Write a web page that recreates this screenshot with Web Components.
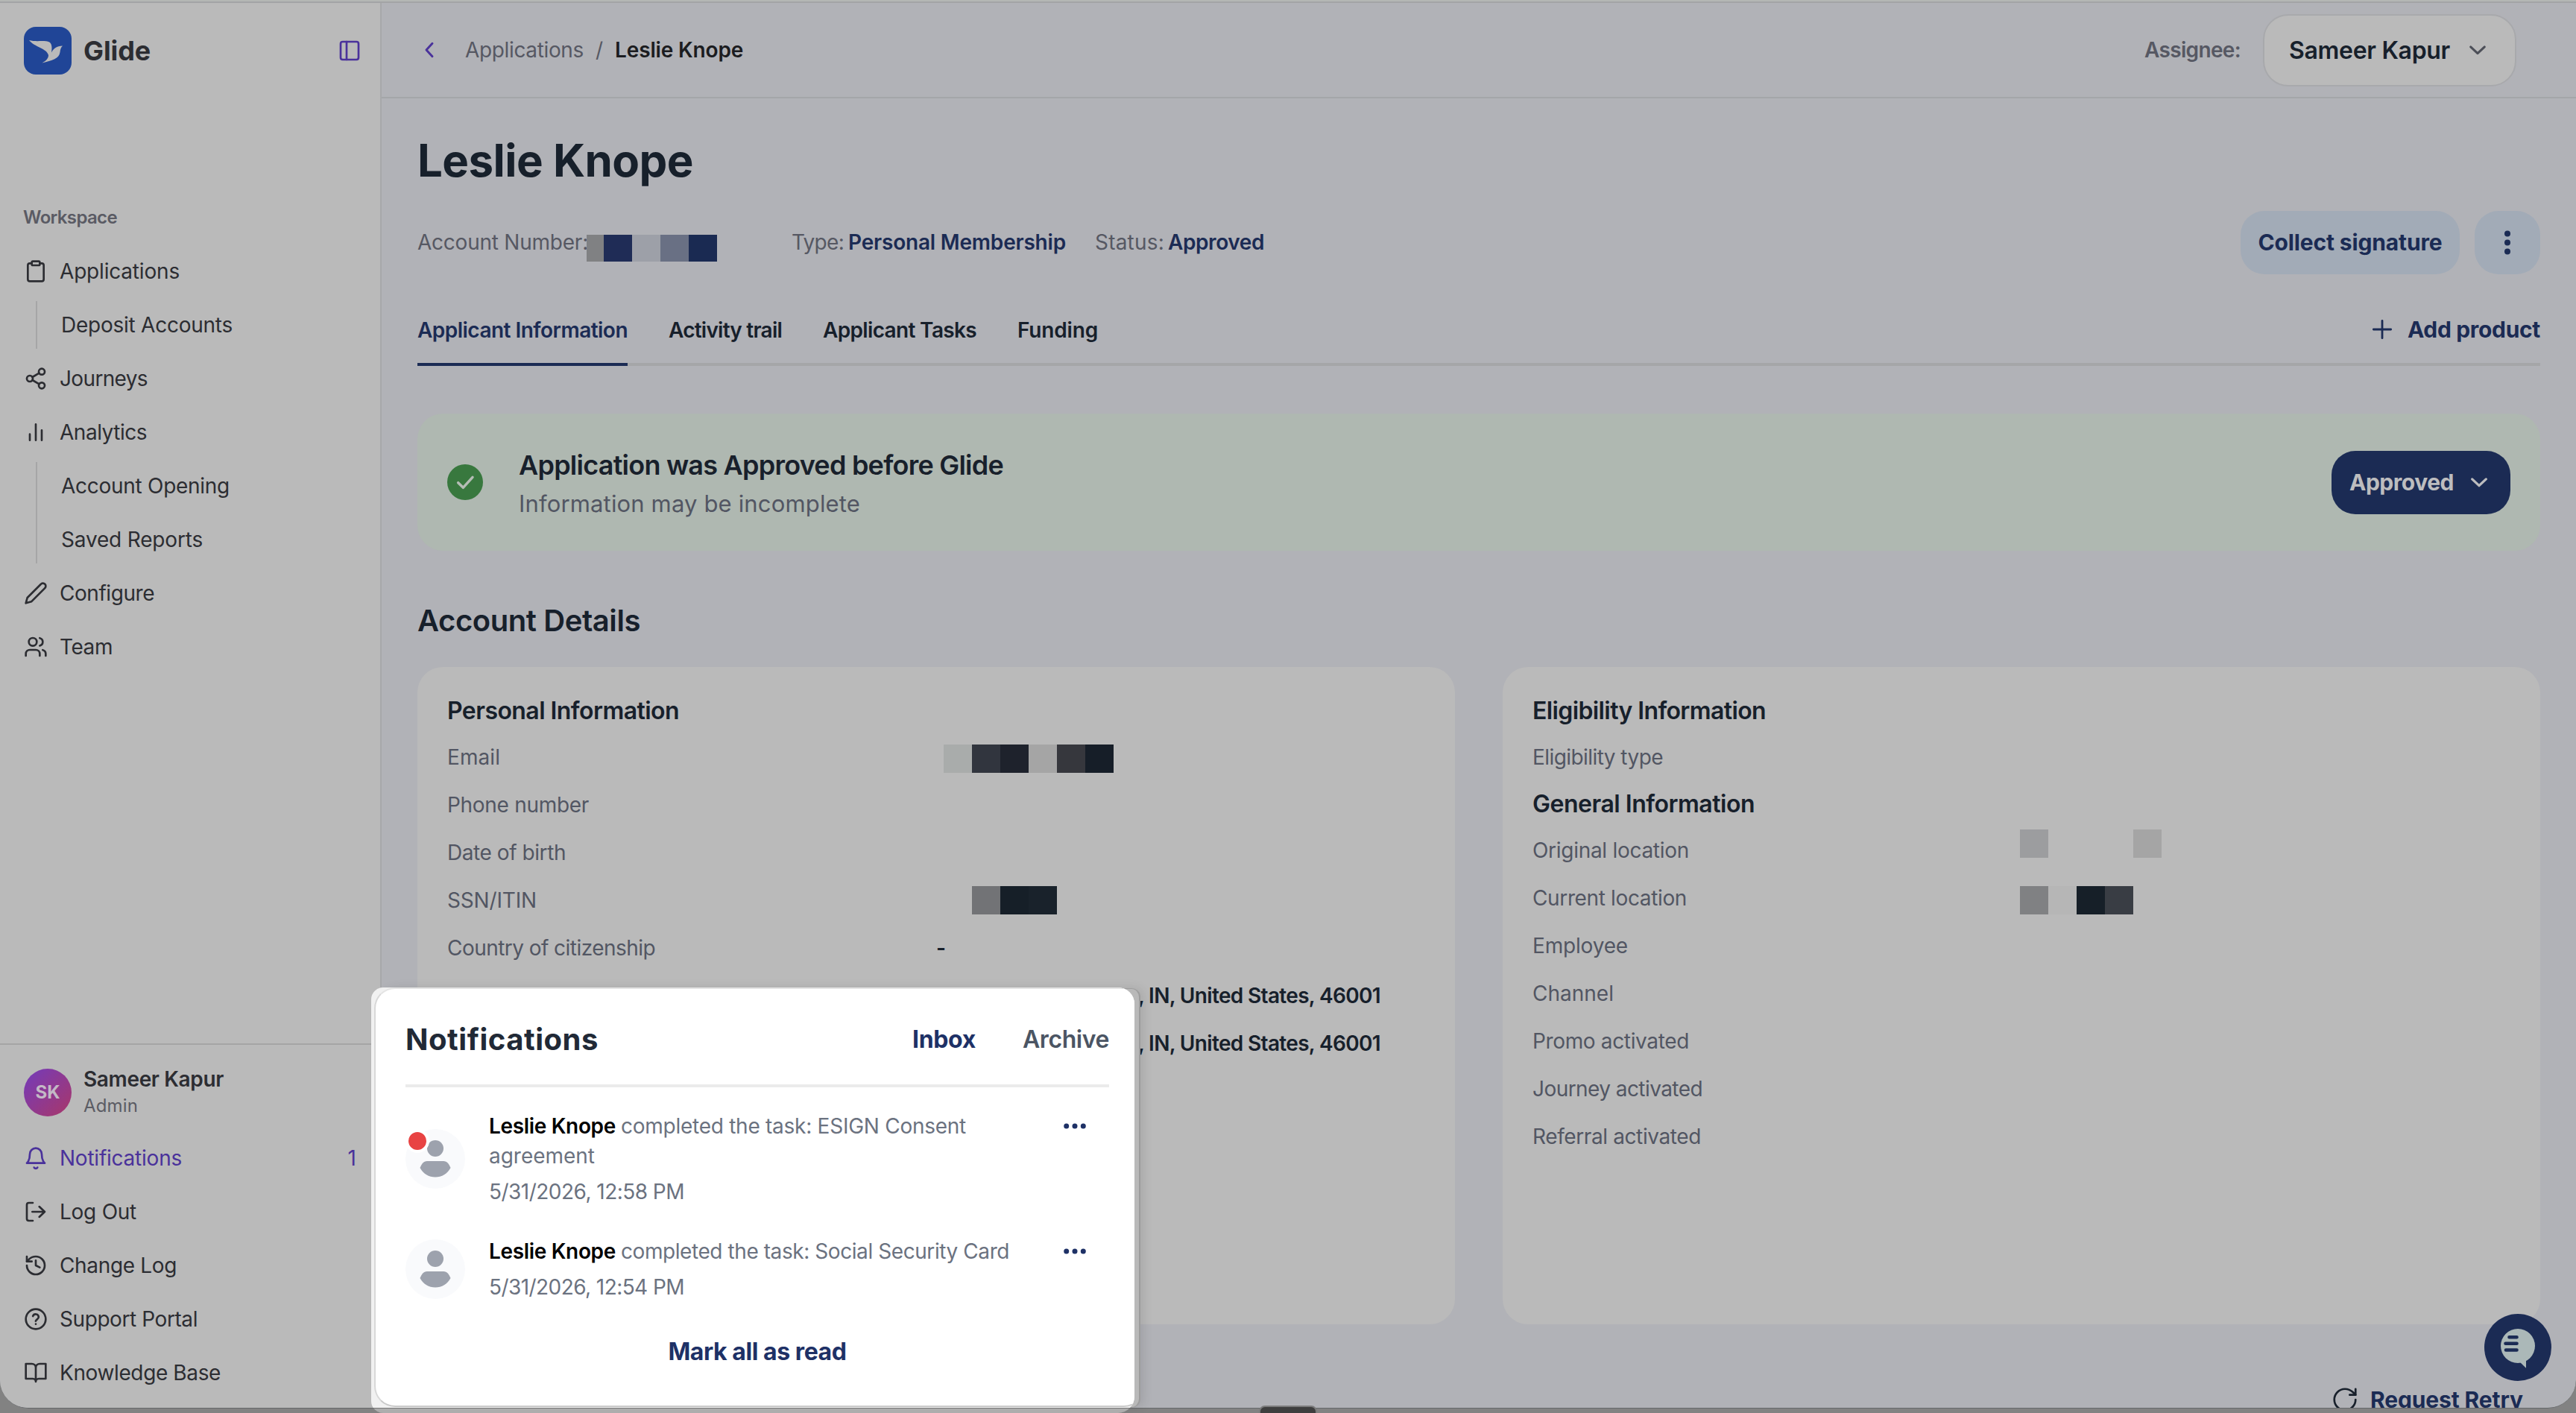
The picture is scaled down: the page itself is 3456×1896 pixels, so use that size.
<!DOCTYPE html>
<html lang="en">
<head>
<meta charset="utf-8">
<title>Glide - Leslie Knope</title>
<style>
    html, body{
        margin: 0;
        height: 1896px;
        overflow: hidden;
        background: #828282;
        font-family: Inter, "Liberation Sans", sans-serif;
        font-size: 28px;
        font-weight: 430;
    }
</style>
</head>
<body>
<app-window>
    <side-bar slot="side"></side-bar>
    <top-bar></top-bar>
    <applicant-page></applicant-page>
</app-window>
<notification-panel></notification-panel>
<chat-button></chat-button>
<dock-handle></dock-handle>

<script>
const icons = {
    panel: '<rect x="3" y="3" width="18" height="18" rx="2"/><path d="M9 3v18"/>',
    clipboard: '<path d="M16 4h2a2 2 0 0 1 2 2v14a2 2 0 0 1-2 2H6a2 2 0 0 1-2-2V6a2 2 0 0 1 2-2h2"/><rect x="8" y="2" width="8" height="4" rx="1"/>',
    share: '<circle cx="18" cy="5" r="3"/><circle cx="6" cy="12" r="3"/><circle cx="18" cy="19" r="3"/><path d="M8.6 13.5l6.8 4M15.4 6.5l-6.8 4"/>',
    bars: '<path d="M18 20V10M12 20V4M6 20v-6"/>',
    pencil: '<path d="M17 3a2.85 2.83 0 1 1 4 4L7.5 20.5 2 22l1.5-5.5Z"/>',
    users: '<path d="M16 21v-2a4 4 0 0 0-4-4H6a4 4 0 0 0-4 4v2"/><circle cx="9" cy="7" r="4"/><path d="M22 21v-2a4 4 0 0 0-3-3.87M16 3.13a4 4 0 0 1 0 7.75"/>',
    bell: '<path d="M6 8a6 6 0 0 1 12 0c0 7 3 9 3 9H3s3-2 3-9"/><path d="M10.3 21.4a1.94 1.94 0 0 0 3.4 0"/>',
    logout: '<path d="M9 21H5a2 2 0 0 1-2-2V5a2 2 0 0 1 2-2h4M15.5 17.2 21 12l-5.500-5.200M21 12H8.500"/>',
    history: '<path d="M3 12a9 9 0 1 0 9-9 9.750 9.750 0 0 0-6.740 2.740L3 8"/><path d="M3 3v5h5M12 7v5l4 2"/>',
    help: '<circle cx="12" cy="12" r="10"/><path d="M9.1 9a3 3 0 0 1 5.800 1c0 2-3 2.700-3 4M12 17h.01"/>',
    book: '<path d="M2 3h6a4 4 0 0 1 4 4v14a3 3 0 0 0-3-3H2zM22 3h-6a4 4 0 0 0-4 4v14a3 3 0 0 1 3-3h7z"/>',
    left: '<path d="M15 5.500 9 12l6 6.500"/>',
    down: '<path d="M4 8.500l8 7.500 8-7.500"/>',
    plus: '<path d="M12 2v20M2 12h20"/>',
    retry: '<path d="M21 12a9 9 0 1 1-9-9c2.520 0 4.930 1 6.740 2.740L21 8"/><path d="M21 3v5h-5"/>',
    check: '<path d="M5 12.500l5 5L19.500 7"/>'
};

/* every element takes its markup from a template string */
class Base extends HTMLElement{
    constructor(){
        super();
        const tpl = document.createElement('template');
        tpl.innerHTML = this.render();
        this.attachShadow({mode: 'open'}).appendChild(tpl.content.cloneNode(true));
    }
    attr(name, def = ''){
        return this.getAttribute(name) ?? def;
    }
}

/* <ui-icon name="bell" size="32" stroke="2"> */
class UiIcon extends Base{
    render(){
        const size = this.attr('size', 32);
        return `
        <style>
            :host{ display: block; flex: none; width: ${size}px; height: ${size}px; }
            svg{ display: block; width: 100%; height: 100%; }
        </style>
        <svg viewBox="0 0 24 24" fill="none" stroke="currentColor" stroke-width="${this.attr('stroke', 2)}"
            stroke-linecap="round" stroke-linejoin="round">${icons[this.attr('name')]}</svg>`;
    }
}
customElements.define('ui-icon', UiIcon);

class NavItem extends Base{
    render(){
        const icon = this.hasAttribute('icon') ? `<ui-icon name="${this.attr('icon')}"></ui-icon>` : '';
        return `
        <style>
            :host{ display: flex; align-items: center; gap: 16px; height: 64px; color: #2c2d32; }
            :host([active]){ color: #4a329b; }
            ::slotted([slot=badge]){ margin-left: auto; }
        </style>
        ${icon}<ui-text fit="${this.attr('fit')}">${this.attr('label')}</ui-text>
        <slot name="badge"></slot>`;
    }
}
customElements.define('nav-item', NavItem);

class NavGroup extends Base{
    render(){
        return `
        <style>
            :host{
                display: flex; flex-direction: column; gap: 8px;
                margin-left: 16px; padding-left: 32px;
                border-left: 2px solid #a6a6a7;
            }
        </style>
        <slot></slot>`;
    }
}
customElements.define('nav-group', NavGroup);

class SideBar extends Base{
    render(){
        return `
        <style>
            :host{
                display: flex; flex-direction: column; box-sizing: border-box;
                width: 512px; height: 100%; padding-top: 32px;
                background: #bababa; border-right: 2px solid #a7a8aa; color: #2c2d32;
            }
            header{ display: flex; align-items: center; height: 64px; padding: 0 25px 0 32px; }
            .logo{ width: 64px; height: 64px; }
            .brand{ font-size: 36px; font-weight: 700; margin-left: 16px; }
            header ui-icon{ margin-left: auto; color: #4a329b; }
            h6{ margin: 172px 0 20px 31px; font-size: 24px; font-weight: 600; line-height: 40px; color: #5a5b64; }
            nav{ display: flex; flex-direction: column; gap: 8px; padding: 0 32px; }
            footer{ margin-top: auto; height: 487px; border-top: 2px solid #a5a5a5; }
            .user{ display: flex; align-items: center; gap: 16px; margin: 28px 32px 20px; line-height: 36px; }
            .avatar{
                width: 64px; height: 64px; border-radius: 50%; line-height: 64px; text-align: center;
                font-size: 24px; font-weight: 700; color: #c3b9c6;
                background: linear-gradient(135deg, #733bbb, #a93768);
            }
            .who{ display: flex; flex-direction: column; }
            .who b{ font-weight: 600; }
            .who small{ font-size: 24px; color: #5b5c64; }
        </style>
        <header>
            <svg class="logo" viewBox="0 0 64 64">
                <rect width="64" height="64" rx="16" fill="#204597"/>
                <path fill="#bababa" d="M7 18C15 20 22 18.600 30 19.300C37 20 38.500 25 37 34.500C40 29 44 25.500 52 25.500C49.500 28 49 30 48.500 34C47.500 43 38 45 24.500 48.500C30 45.500 33 42 33 38C31 29 14 27 7 18Z"/>
            </svg>
            <ui-text class="brand" fit="90">Glide</ui-text>
            <ui-icon name="panel"></ui-icon>
        </header>
        <h6><ui-text fit="126">Workspace</ui-text></h6>
        <nav>
            <nav-item icon="clipboard" label="Applications" fit="161"></nav-item>
            <nav-group><nav-item label="Deposit Accounts" fit="230"></nav-item></nav-group>
            <nav-item icon="share" label="Journeys" fit="118"></nav-item>
            <nav-item icon="bars" label="Analytics" fit="117"></nav-item>
            <nav-group>
                <nav-item label="Account Opening" fit="226"></nav-item>
                <nav-item label="Saved Reports" fit="190"></nav-item>
            </nav-group>
            <nav-item icon="pencil" label="Configure" fit="127"></nav-item>
            <nav-item icon="users" label="Team" fit="71"></nav-item>
        </nav>
        <footer>
            <div class="user">
                <div class="avatar">SK</div>
                <div class="who">
                    <b><ui-text fit="188">Sameer Kapur</ui-text></b>
                    <small><ui-text fit="73">Admin</ui-text></small>
                </div>
            </div>
            <nav>
                <nav-item icon="bell" label="Notifications" fit="164" active><span slot="badge">1</span></nav-item>
                <nav-item icon="logout" label="Log Out" fit="103"></nav-item>
                <nav-item icon="history" label="Change Log" fit="157"></nav-item>
                <nav-item icon="help" label="Support Portal" fit="185"></nav-item>
                <nav-item icon="book" label="Knowledge Base" fit="216"></nav-item>
            </nav>
        </footer>`;
    }
}
customElements.define('side-bar', SideBar);

class AppWindow extends Base{
    render(){
        return `
        <style>
            :host{
                display: flex; box-sizing: border-box; height: 1890px; overflow: hidden;
                border-top: 2px solid #b4b7b4; border-bottom: 1px solid #66686a;
                border-radius: 0 0 38px 38px;
                background: #b1b2b7;
                box-shadow: inset 0 2px #a3a4a6;
                padding-top: 2px;
            }
            main{ flex: 1; min-width: 0; height: 100%; overflow: hidden; }
        </style>
        <slot name="side"></slot>
        <main><slot></slot></main>`;
    }
}
customElements.define('app-window', AppWindow);

class TopBar extends Base{
    render(){
        return `
        <style>
            :host{
                display: flex; align-items: center; box-sizing: border-box;
                height: 128px; padding: 0 80px 0 48px;
                border-bottom: 2px solid #a4a6a9; color: #565863;
            }
            .back{ color: #4a329b; margin-right: 33px; }
            .sep{ margin: 0 16px; }
            .here{ color: #1b1c20; font-weight: 600; }
            .assignee{ margin-left: auto; margin-right: 30px; font-weight: 600; }
            .select{
                display: flex; align-items: center; justify-content: space-between; box-sizing: border-box;
                width: 340px; height: 97px; padding: 0 36px 0 33px;
                border: 2px solid #a8a9ac; border-radius: 34px; background: #bababa;
                font-size: 32px; font-weight: 600; color: #17202b;
            }
            .select ui-icon{ color: #4c4f58; }
        </style>
        <ui-icon class="back" name="left" size="32" stroke="2.2"></ui-icon>
        <ui-text fit="159" style="margin-left:-1px">Applications</ui-text>
        <span class="sep">/</span>
        <ui-text class="here" fit="172">Leslie Knope</ui-text>
        <ui-text class="assignee" fit="129">Assignee:</ui-text>
        <div class="select"><ui-text fit="216">Sameer Kapur</ui-text><ui-icon name="down" size="28" stroke="2.6"></ui-icon></div>`;
    }
}
customElements.define('top-bar', TopBar);

/* strip of censoring blocks: colors separated by spaces, "-" leaves a hole */
class PixelMask extends Base{
    render(){
        const widths = this.attr('widths').split(' ');
        const cells = this.attr('colors').split(' ').map((c, i) =>
            `<i style="background:${c == '-' ? 'none' : c};width:${widths[i] || 38}px"></i>`);
        return `
        <style>
            :host{ display: inline-flex; height: ${this.attr('height', 38)}px; transform: translate(${this.attr('dx', 0)}px, ${this.attr('dy', 0)}px); }
        </style>
        ${cells.join('')}`;
    }
}
customElements.define('pixel-mask', PixelMask);

/* <ui-button kind="soft|solid|link"> */
class UiButton extends Base{
    render(){
        return `
        <style>
            :host{
                display: flex; align-items: center; justify-content: center; box-sizing: border-box;
                height: 85px; padding: 0 24px; border-radius: 32px;
                font-size: 30px; font-weight: 650; color: #1b2b54;
            }
            :host([kind=soft]){ background: #a2abb7; }
            :host([kind=solid]){ background: #1b2b54; color: #bdbdbf; }
            :host([kind=link]){ padding: 0; }
        </style>
        <slot></slot>`;
    }
}
customElements.define('ui-button', UiButton);

class TabList extends Base{
    render(){
        return `
        <style>
            :host{
                display: flex; align-items: stretch; height: 90px; margin-top: 30px;
                border-bottom: 4px solid #a5a6a8; color: #17202b; font-weight: 600;
            }
            ::slotted(ui-text){ line-height: 87px; padding-top: 3px; margin-right: 55px; }
            ::slotted([active]){ color: #1b2b54; border-bottom: 4px solid #1b2b54; margin-bottom: -4px; }
            ::slotted(ui-button){ margin-left: auto; }
        </style>
        <slot></slot>`;
    }
}
customElements.define('tab-list', TabList);

class StatusBanner extends Base{
    render(){
        return `
        <style>
            :host{
                display: flex; align-items: center; box-sizing: border-box;
                height: 184px; margin-top: 64px; padding: 0 40px; border-radius: 34px; background: #afb8b1;
            }
            .dot{
                display: grid; place-items: center; width: 48px; height: 48px; border-radius: 50%;
                background: #38783e; color: #b5bdb5; margin-right: 48px;
            }
            .text{ display: flex; flex-direction: column; line-height: 52px; padding-top: 6px; }
            .title{ font-size: 36px; font-weight: 600; color: #18202b; }
            .sub{ font-size: 31px; color: #525663; }
            ui-button{ margin-left: auto; width: 240px; padding: 0 28px 0 24px; justify-content: space-between; }
        </style>
        <div class="dot"><ui-icon name="check" size="32" stroke="2.6"></ui-icon></div>
        <div class="text">
            <ui-text class="title" fit="650">Application was Approved before Glide</ui-text>
            <ui-text class="sub" fit="458">Information may be incomplete</ui-text>
        </div>
        <ui-button kind="solid"><ui-text fit="140">Approved</ui-text><ui-icon name="down" size="28" stroke="2.8"></ui-icon></ui-button>`;
    }
}
customElements.define('status-banner', StatusBanner);

class InfoRow extends Base{
    render(){
        return `
        <style>
            :host{ display: grid; grid-template-columns: 656px 1fr; align-items: center; height: 64px; color: #525663; }
            .value{ display: flex; align-items: center; color: #17202b; font-weight: 600; }
        </style>
        <ui-text fit="${this.attr('fit')}">${this.attr('label')}</ui-text>
        <div class="value"><slot></slot></div>`;
    }
}
customElements.define('info-row', InfoRow);

class InfoCard extends Base{
    render(){
        return `
        <style>
            :host{
                display: block; box-sizing: border-box; height: 882px; padding: 37px 40px 0;
                border-radius: 34px; background: #bababa;
            }
            ::slotted(h3){ margin: 0 0 8px; height: 44px; line-height: 44px; font-size: 32px; font-weight: 600; color: #17202b; }
            ::slotted(h3.next){ height: 60px; line-height: 61px; margin-bottom: 1px; }
        </style>
        <slot></slot>`;
    }
}
customElements.define('info-card', InfoCard);

class ApplicantPage extends Base{
    render(){
        return `
        <style>
            :host{ display: block; padding: 0 48px; }
            h1{ margin: 43px 0 28px; font-size: 60px; font-weight: 700; line-height: 80px; color: #17202b; }
            h2{ margin: 64px 0 32px; font-size: 40px; font-weight: 600; line-height: 60px; color: #17202b; }
            .meta{ display: flex; align-items: center; height: 84px; color: #565863; }
            .meta b{ font-weight: 600; color: #1b2b54; }
            .meta .gap{ width: 98px; }
            .actions{ display: flex; gap: 20px; margin-left: auto; }
            .actions .sign{ width: 294px; }
            .actions .more{ width: 88px; padding: 0; }
            .more svg{ width: 8px; height: 33px; }
            .add{ height: 90px; }
            .cards{ display: grid; grid-template-columns: 1fr 1fr; gap: 64px; }
            .address{ margin-left: 271px; }
            .retry{ display: flex; align-items: center; justify-content: flex-end; gap: 15px; height: 64px; margin: 69px 23px 0 0; color: #18202b; }
        </style>
        <h1><ui-text fit="370">Leslie Knope</ui-text></h1>
        <div class="meta">
            <ui-text fit="229">Account Number:</ui-text>
            <pixel-mask height="36" dx="-2" dy="8" widths="23 38 38 38 38" colors="#808183 #1f2c56 #9da0a8 #697084 #1a2a52"></pixel-mask>
            <span class="gap"></span>
            <ui-text fit="70">Type:</ui-text>
            <b style="margin-left:6px"><ui-text fit="292">Personal Membership</ui-text></b>
            <ui-text fit="93" style="margin-left:39px">Status:</ui-text>
            <b style="margin-left:5px"><ui-text fit="129">Approved</ui-text></b>
            <div class="actions">
                <ui-button class="sign" kind="soft"><ui-text fit="247">Collect signature</ui-text></ui-button>
                <ui-button class="more" kind="soft">
                    <svg viewBox="0 0 8 33" fill="#1b2b54"><circle cx="4" cy="4.500" r="4"/><circle cx="4" cy="16.500" r="4"/><circle cx="4" cy="28.500" r="4"/></svg>
                </ui-button>
            </div>
        </div>
        <tab-list>
            <ui-text fit="282" active>Applicant Information</ui-text>
            <ui-text fit="152">Activity trail</ui-text>
            <ui-text fit="206">Applicant Tasks</ui-text>
            <ui-text fit="108">Funding</ui-text>
            <ui-button class="add" kind="link">
                <ui-icon name="plus" size="28" stroke="2.4" style="margin-right:20px"></ui-icon>
                <ui-text fit="178">Add product</ui-text>
            </ui-button>
        </tab-list>
        <status-banner></status-banner>
        <h2><ui-text fit="299">Account Details</ui-text></h2>
        <div class="cards">
            <info-card>
                <h3><ui-text fit="311">Personal Information</ui-text></h3>
                <info-row label="Email" fit="71"><pixel-mask dx="10" dy="2" colors="#a9acab #31353e #1e222c #a5a5a5 #36373d #161e28"></pixel-mask></info-row>
                <info-row label="Phone number" fit="190"></info-row>
                <info-row label="Date of birth" fit="159"></info-row>
                <info-row label="SSN/ITIN" fit="120"><pixel-mask dx="48" colors="#727376 #161f28 #19222b"></pixel-mask></info-row>
                <info-row label="Country of citizenship" fit="279">-</info-row>
                <info-row><ui-text class="address" fit="325">, IN, United States, 46001</ui-text></info-row>
                <info-row><ui-text class="address" fit="325">, IN, United States, 46001</ui-text></info-row>
            </info-card>
            <info-card>
                <h3><ui-text fit="313">Eligibility Information</ui-text></h3>
                <info-row label="Eligibility type" fit="175"></info-row>
                <h3 class="next"><ui-text fit="298">General Information</ui-text></h3>
                <info-row label="Original location" fit="210"><pixel-mask dx="-2" dy="-9" colors="#9c9d9f - - - #a5a5a5"></pixel-mask></info-row>
                <info-row label="Current location" fit="207"><pixel-mask dx="-2" dy="3" colors="#808183 #b6b6b6 #161f28 #393d44"></pixel-mask></info-row>
                <info-row label="Employee" fit="128"></info-row>
                <info-row label="Channel" fit="109"></info-row>
                <info-row label="Promo activated" fit="210"></info-row>
                <info-row label="Journey activated" fit="228"></info-row>
                <info-row label="Referral activated" fit="226"></info-row>
            </info-card>
        </div>
        <div class="retry">
            <ui-icon name="retry" size="38" stroke="1.7"></ui-icon>
            <ui-button kind="link"><ui-text fit="205">Request Retry</ui-text></ui-button>
        </div>`;
    }
}
customElements.define('applicant-page', ApplicantPage);

class NotificationItem extends Base{
    render(){
        return `
        <style>
            :host{ display: flex; height: ${this.attr('height')}px; color: #6b7280; line-height: 40px; }
            .avatar{ position: relative; width: 80px; height: 80px; margin-top: ${this.attr('drop')}px; }
            .avatar > svg{ display: block; }
            .dot{
                display: none; position: absolute; left: 0; top: 0; width: 24px; height: 24px;
                border: 4px solid #fff; border-radius: 50%; background: #e84343;
            }
            :host([unread]) .dot{ display: block; }
            .text{ flex: 1; margin-left: 32px; }
            .line{ display: flex; height: 40px; }
            .date{ margin-top: 8px; }
            b{ font-weight: 600; color: #000; margin-right: 7px; }
            .more{ margin: 16px 28px 0 0; width: 36px; height: 8px; }
        </style>
        <div class="avatar">
            <svg width="80" height="80" viewBox="0 0 80 80">
                <circle cx="40" cy="40" r="40" fill="#f9fafc"/>
                <g fill="#9da2ad"><circle cx="40" cy="26" r="11"/><path d="M29 43h22c5 0 7 3.500 9.500 9c-4 8-12 12.500-20.500 12.500s-16.500-4.500-20.500-12.500c2.500-5.500 4.500-9 9.500-9z"/></g>
            </svg>
            <span class="dot"></span>
        </div>
        <div class="text">
            <div class="line"><b><ui-text fit="170">Leslie Knope</ui-text></b><ui-text fit="${this.attr('fit')}">${this.attr('task')}</ui-text></div>
            ${this.hasAttribute('rest') ? `<div class="line"><ui-text fit="142">${this.attr('rest')}</ui-text></div>` : ''}
            <div class="line date"><ui-text fit="262">${this.attr('date')}</ui-text></div>
        </div>
        <svg class="more" viewBox="0 0 36 8" fill="#1e3166"><circle cx="6.700" cy="4" r="3.500"/><circle cx="18" cy="4" r="3.500"/><circle cx="29.300" cy="4" r="3.500"/></svg>`;
    }
}
customElements.define('notification-item', NotificationItem);

/* the panel lies over the page; .spot is the bright part, .edge the dimmed rim behind it */
class NotificationPanel extends Base{
    render(){
        return `
        <style>
            .edge{
                position: absolute; left: 504px; top: 1326px; width: 1024px; height: 561px;
                border: 1px solid #9d9d9d; border-width: 1px 2px 1px 0; border-radius: 28px 12px 12px 28px;
                background: #b9b9b9; box-shadow: 4px 0 14px rgba(0,0,0,.1);
            }
            .spot{
                position: absolute; left: 498px; top: 1325px; width: 1024px; height: 571px; overflow: hidden;
                border-radius: 16px 22px 22px 16px;
                background: linear-gradient(#f1f1f1 564px, #777 564px, #777 565px, #adadad 565px);
            }
            .panel{
                box-sizing: border-box; width: 1034px; height: 563px; margin-left: 4px; padding: 0 44px 0 40px;
                border: 2px solid #d8d8d8; border-top-color: #e4e4e4; border-bottom-color: #c9c9c9;
                border-radius: 28px; background: #fff;
            }
            header{
                display: flex; align-items: center; box-sizing: border-box; width: 944px; height: 132px;
                padding-top: 7px; border-bottom: 4px solid #ebebeb; margin-bottom: 32px;
            }
            h4{ margin: 0 auto 0 0; font-size: 40px; font-weight: 700; color: #212936; }
            .tab{ font-size: 32px; font-weight: 600; color: #4b5563; margin-left: 63px; }
            .tab[active]{ color: #1e3166; font-weight: 650; }
            section{ width: 944px; }
            .all{ display: block; width: 944px; text-align: center; font-size: 32px; font-weight: 650; line-height: 48px; color: #1e3166; }
        </style>
        <div class="edge"></div>
        <div class="spot">
            <div class="panel">
                <header>
                    <h4><ui-text fit="259">Notifications</ui-text></h4>
                    <ui-text class="tab" active fit="85">Inbox</ui-text>
                    <ui-text class="tab" fit="116">Archive</ui-text>
                </header>
                <section>
                    <notification-item unread height="168" drop="24" fit="463" task="completed the task: ESIGN Consent" rest="agreement" date="5/31/2026, 12:58 PM"></notification-item>
                    <notification-item height="131" drop="4" fit="521" task="completed the task: Social Security Card" date="5/31/2026, 12:54 PM"></notification-item>
                </section>
                <div class="all"><ui-text fit="239">Mark all as read</ui-text></div>
            </div>
        </div>`;
    }
}
customElements.define('notification-panel', NotificationPanel);

class ChatButton extends Base{
    render(){
        return `
        <style>
            :host{ position: absolute; left: 3333px; top: 1763px; width: 90px; height: 90px; }
        </style>
        <svg width="90" height="90" viewBox="0 0 90 90">
            <circle cx="45" cy="45" r="45" fill="#1b2b54"/>
            <circle cx="45" cy="43" r="23" fill="#abb8b8"/>
            <path fill="#abb8b8" d="M46 63l10 9.700V58z"/>
            <path stroke="#1b2b54" stroke-width="4.600" stroke-linecap="round" d="M33.500 31.200H43.500M28.500 39.800H43.500M29 48.500H43.500"/>
        </svg>`;
    }
}
customElements.define('chat-button', ChatButton);

class DockHandle extends Base{
    render(){
        return `
        <style>
            :host{
                position: absolute; left: 1689px; top: 1886px; width: 74px; height: 12px;
                border: 2px solid #7b7b7b; border-radius: 8px 8px 0 0; background: #3e3e3e;
            }
        </style>`;
    }
}
customElements.define('dock-handle', DockHandle);

/* <ui-text fit="160">: spreads the letters so that the text is that many px wide */
/* defined last: it measures, so the rest of the tree has to be in place */
class UiText extends Base{
    render(){
        return `
        <style>
            :host{ display: inline-block; flex: none; white-space: nowrap; }
        </style>
        <slot></slot>`;
    }
    connectedCallback(){
        const fit = parseFloat(this.getAttribute('fit'));
        const len = this.textContent.length;
        if (!fit || !len) return;
        const range = document.createRange();
        range.selectNodeContents(this);
        const width = range.getBoundingClientRect().width;
        this.style.letterSpacing = ((fit - width) / len).toFixed(3) + 'px';
    }
}
customElements.define('ui-text', UiText);
</script>
</body>
</html>
